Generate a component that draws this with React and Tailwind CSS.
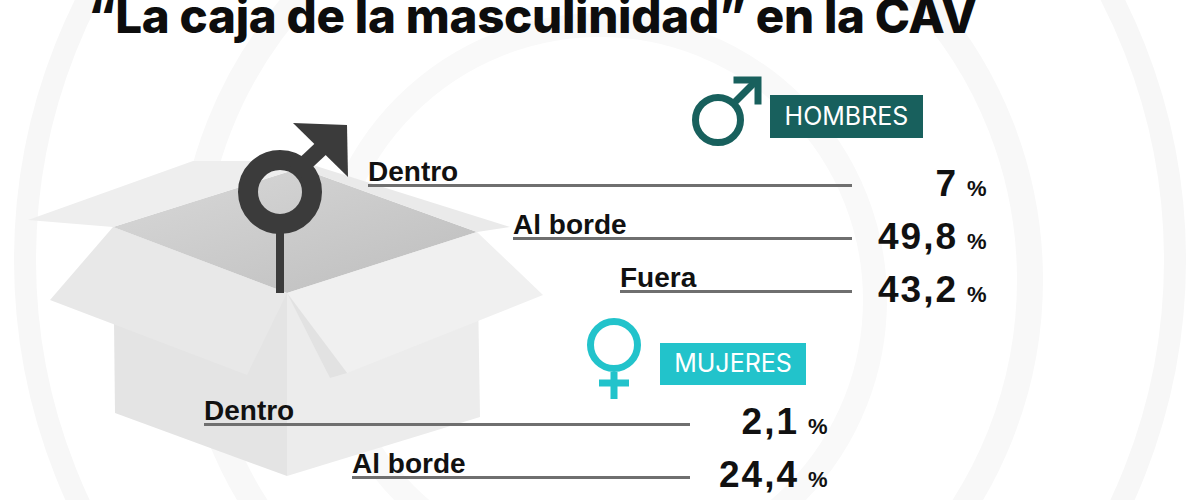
import React from "react";

const upperRows = [
  { label: "Dentro", value: "7", pad: "pl-[368px]", w: "w-[484px]" },
  { label: "Al borde", value: "49,8", pad: "pl-[513px]", w: "w-[339px]" },
  { label: "Fuera", value: "43,2", pad: "pl-[620px]", w: "w-[232px]" },
];

const lowerRows = [
  { label: "Dentro", value: "2,1", pad: "pl-[204px]", w: "w-[486px]" },
  { label: "Al borde", value: "24,4", pad: "pl-[352px]", w: "w-[338px]" },
];

const label = "font-['Liberation_Sans',Arial,sans-serif] font-bold text-[28px] leading-[24px] text-[#111]";
const number = "font-['Liberation_Sans',Arial,sans-serif] font-bold text-[37px] leading-[36px] tracking-[2px] text-[#111] text-right";
const pct = "font-['Liberation_Sans',Arial,sans-serif] font-bold text-[22px] text-[#111]";

function Background() {
  return (
    <svg className="absolute inset-0" width="1200" height="500" viewBox="0 0 1200 500">
      <circle cx="600" cy="260" r="575" fill="none" stroke="#f7f7f7" strokeWidth="22" />
      <circle cx="610" cy="280" r="420" fill="none" stroke="#f8f8f8" strokeWidth="26" />
      <circle cx="600" cy="300" r="275" fill="none" stroke="#f9f9f9" strokeWidth="24" />
    </svg>
  );
}

function BoxDrawing() {
  return (
    <svg className="absolute inset-0" width="1200" height="500" viewBox="0 0 1200 500">
      <defs>
        <linearGradient id="inside" x1="0" y1="0" x2="1" y2="1">
          <stop offset="0" stopColor="#d9d9d9" />
          <stop offset="1" stopColor="#bdbdbd" />
        </linearGradient>
      </defs>
      {/* faces */}
      <polygon points="113,227 287,293 287,476 115,413" fill="#e4e4e4" />
      <polygon points="287,293 477,232 480,417 287,476" fill="#ececec" />
      {/* opening */}
      <polygon points="113,227 300,168 477,232 287,293" fill="url(#inside)" />
      {/* back flaps */}
      <polygon points="28,220 193,161 300,161 300,168 113,227" fill="#eeeeee" />
      <polygon points="300,161 510,227 477,232 300,168" fill="#eaeaea" />
      {/* front flaps */}
      <polygon points="113,227 287,293 247,375 50,300" fill="#e8e8e8" />
      <polygon points="287,293 477,232 543,295 347,373" fill="#f0f0f0" />
      <polygon points="287,293 347,373 330,378" fill="#e2e2e2" />
      {/* male symbol */}
      <circle cx="280" cy="192" r="32" fill="none" stroke="#3b3b3b" strokeWidth="20" />
      <rect x="276" y="228" width="8" height="65" fill="#3b3b3b" />
      <line x1="296" y1="172" x2="328" y2="142" stroke="#3b3b3b" strokeWidth="16" />
      <polygon points="293,123 347,125 348,177" fill="#3b3b3b" />
    </svg>
  );
}

function Symbols() {
  return (
    <svg className="absolute inset-0" width="1200" height="500" viewBox="0 0 1200 500">
      {/* teal male */}
      <circle cx="718" cy="120" r="22.5" fill="none" stroke="#18605d" strokeWidth="7" />
      <line x1="733" y1="104" x2="755" y2="82" stroke="#18605d" strokeWidth="7" />
      <polyline points="737,80 758,80 758,101" fill="none" stroke="#18605d" strokeWidth="7" strokeLinecap="square" />
      {/* cyan female */}
      <circle cx="614" cy="345" r="23.5" fill="none" stroke="#22c3cb" strokeWidth="7" />
      <rect x="610.5" y="372" width="7" height="27" fill="#22c3cb" />
      <rect x="599" y="379.5" width="30" height="7" fill="#22c3cb" />
    </svg>
  );
}

function Row({ row, numW, mt }) {
  return (
    <div className={`flex items-start h-[53px] ${row.pad}`}>
      <div className={`${row.w} ${label} border-b-[3px] border-[#6f6f6f]`}>{row.label}</div>
      <div className={`flex items-baseline ${mt}`}>
        <span className={`${number} ${numW}`}>{row.value}</span>
        <span className={`${pct} ml-[9px]`}>%</span>
      </div>
    </div>
  );
}

export default function App() {
  return (
    <div className="relative w-[1200px] h-[500px] overflow-hidden bg-white">
      <Background />
      <BoxDrawing />
      <Symbols />

      <div className="relative flex flex-col">
        <h1 className="mt-[-8px] pl-[88px] font-['Inter',sans-serif] font-extrabold text-[47.5px] leading-[47px] tracking-[-0.3px] text-[#0d0d0d] whitespace-nowrap">
          “La caja de la masculinidad” en la CAV
        </h1>

        <div className="mt-[56px] ml-[770px] w-[153px] h-[43px] bg-[#18605d] flex items-center justify-center">
          <span className="font-['Inter',sans-serif] text-[25px] text-white">HOMBRES</span>
        </div>

        <div className="mt-[22px] flex flex-col">
          {upperRows.map((r) => (
            <Row key={r.label} row={r} numW="w-[106px]" mt="mt-[6px]" />
          ))}
        </div>

        <div className="mt-[24px] ml-[660px] w-[146px] h-[42px] bg-[#22c3cb] flex items-center justify-center">
          <span className="font-['Inter',sans-serif] text-[25px] text-white">MUJERES</span>
        </div>

        <div className="mt-[14px] flex flex-col">
          {lowerRows.map((r) => (
            <Row key={r.label} row={r} numW="w-[109px]" mt="mt-[5px]" />
          ))}
        </div>
      </div>
    </div>
  );
}
